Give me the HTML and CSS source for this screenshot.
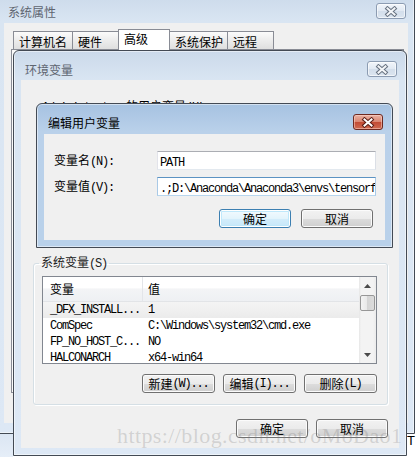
FILE: index.html
```html
<!DOCTYPE html>
<html lang="zh-CN">
<head>
<meta charset="utf-8">
<title>系统属性</title>
<link rel="stylesheet" href="styles.css">
</head>
<body>
<div class="deskcorner"></div>
<span class="desk-t">T</span>

<div class="win sys inactive">
  <div class="titlebar">
    <span class="title">系统属性</span>
    <span class="close"><svg width="14" height="11" viewBox="0 0 14 11"><path d="M3.5 2.5 L10.5 8.5 M10.5 2.5 L3.5 8.5" stroke="#66717f" stroke-width="4" stroke-linecap="square" fill="none"/><path d="M3.5 2.5 L10.5 8.5 M10.5 2.5 L3.5 8.5" stroke="#f4f6f9" stroke-width="2" stroke-linecap="square" fill="none"/></svg></span>
  </div>
  <div class="client sysbody">
    <div class="tabs">
      <span class="tab t1">计算机名</span>
      <span class="tab t2">硬件</span>
      <span class="tab t3 sel">高级</span>
      <span class="tab t4">系统保护</span>
      <span class="tab t5">远程</span>
    </div>
    <div class="tabpanel"></div>
  </div>
</div>

<div class="win env inactive">
  <div class="titlebar">
    <span class="title">环境变量</span>
    <span class="close"><svg width="14" height="11" viewBox="0 0 14 11"><path d="M3.5 2.5 L10.5 8.5 M10.5 2.5 L3.5 8.5" stroke="#66717f" stroke-width="4" stroke-linecap="square" fill="none"/><path d="M3.5 2.5 L10.5 8.5 M10.5 2.5 L3.5 8.5" stroke="#f4f6f9" stroke-width="2" stroke-linecap="square" fill="none"/></svg></span>
  </div>
  <div class="client envbody">
    <div class="usersec"><span class="m">Administrator </span>的用户变量<span class="m">(U)</span></div>
    <fieldset class="grp">
      <legend>系统变量<span class="m">(S)</span></legend>
      <div class="list">
        <div class="lv">
          <div class="lvh"><span class="hc1">变量</span><span class="hc2">值</span></div>
          <div class="row sel"><span class="m">_DFX_INSTALL...</span><span class="m">1</span></div>
          <div class="row"><span class="m">ComSpec</span><span class="m">C:\Windows\system32\cmd.exe</span></div>
          <div class="row"><span class="m">FP_NO_HOST_C...</span><span class="m">NO</span></div>
          <div class="row"><span class="m">HALCONARCH</span><span class="m">x64-win64</span></div>
        </div>
        <div class="sb">
          <div class="sbb"><svg width="7" height="4" viewBox="0 0 7 4"><path d="M3.5 0 L7 4 L0 4 Z" fill="#4a4a4a"/></svg></div>
          <div class="sbtrack"><div class="thumb"></div></div>
          <div class="sbb"><svg width="7" height="4" viewBox="0 0 7 4"><path d="M0 0 L7 0 L3.5 4 Z" fill="#4a4a4a"/></svg></div>
        </div>
      </div>
      <div class="btnrow">
        <span class="btn w73">新建<span class="m">(W)...</span></span>
        <span class="btn w73">编辑<span class="m">(I)...</span></span>
        <span class="btn w73">删除<span class="m">(L)</span></span>
      </div>
    </fieldset>
    <div class="okrow">
      <span class="btn w72">确定</span>
      <span class="btn w72">取消</span>
    </div>
  </div>
</div>

<div class="win edit active">
  <div class="titlebar">
    <span class="title">编辑用户变量</span>
    <span class="close red"><svg width="14" height="11" viewBox="0 0 14 11"><path d="M3.5 2.5 L10.5 8.5 M10.5 2.5 L3.5 8.5" stroke="#5a1d15" stroke-width="4" stroke-linecap="square" fill="none"/><path d="M3.5 2.5 L10.5 8.5 M10.5 2.5 L3.5 8.5" stroke="#ffffff" stroke-width="2" stroke-linecap="square" fill="none"/></svg></span>
  </div>
  <div class="client editbody">
    <div class="form">
      <span class="lbl">变量名<span class="m">(N):</span></span>
      <div class="tb"><span class="m">PATH</span></div>
      <span class="lbl">变量值<span class="m">(V):</span></span>
      <div class="tb focus"><span class="m">.;D:\Anaconda\Anaconda3\envs\tensorf</span></div>
    </div>
    <div class="ebtns">
      <span class="btn w72 def">确定</span>
      <span class="btn w72">取消</span>
    </div>
  </div>
</div>

<div class="wm">https://blog.csdn.net/oMoDao1</div>
</body>
</html>
```

FILE: styles.css
```css
* { box-sizing: border-box; }
html, body { margin: 0; padding: 0; }
body {
  width: 418px;
  height: 457px;
  overflow: hidden;
  position: relative;
  background: #ffffff;
  font-family: "Noto Sans CJK SC", "Noto Sans", sans-serif;
  font-size: 12px;
  color: #000;
}
.m {
  font-family: "Liberation Mono", "DejaVu Sans Mono", monospace;
  font-size: 12px;
  letter-spacing: -1.2px;
}

.deskcorner {
  position: absolute;
  left: 0; top: 434px;
  width: 13px; height: 23px;
  background: linear-gradient(#dbe6f3, #e6eef8);
}
.desk-t {
  position: absolute;
  left: 407px; top: 433px;
  font-family: "Liberation Sans", sans-serif;
  font-size: 13px;
  line-height: 16px;
}

/* windows */
.win {
  position: absolute;
  border: 1px solid #434a54;
  border-radius: 6px 6px 0 0;
  padding: 0 7px 7px;
  display: flex;
  flex-direction: column;
  box-shadow: inset 0 0 0 1px rgba(255,255,255,0.5);
}
.win.inactive { background: linear-gradient(#cbd9ea 0, #d9e5f2 28px, #dde8f5 100%); }
.win.active   { background: linear-gradient(#a6c2e1 0, #bad1ea 28px, #b9d1ea 100%); }

.titlebar {
  flex: none;
  display: flex;
  justify-content: space-between;
  align-items: flex-start;
  padding: 10px 2px 0 4px;
}
.title { line-height: 16px; margin-top: 1px; }
.inactive .title { color: #5e6570; }
.active .title { color: #000; }

.close {
  width: 30px; height: 16px;
  border: 1px solid #8c9cb2;
  border-radius: 3px;
  display: flex; align-items: center; justify-content: center;
  background: linear-gradient(#f1f5fa, #e1e9f3 50%, #d3deeb 50%, #dbe5f0);
  box-shadow: inset 0 0 0 1px rgba(255,255,255,0.6);
}
.close.red {
  border-color: #6e2a21;
  background: linear-gradient(#eab2a4, #d9846f 50%, #c24a33 50%, #cf6b53);
  box-shadow: inset 0 0 0 1px rgba(255,220,210,0.5);
}

.client { flex: 1; min-height: 0; background: #f0f0f0; }

.sys { left: -5px; top: -8px; width: 420px; height: 442px; padding: 0 6px 10px 8px; }
.sys .titlebar { height: 30px; }
.env { left: 13px; top: 50px; width: 394px; height: 406px; }
.env .titlebar { height: 29px; }
.edit { left: 36px; top: 103px; width: 357px; height: 145px; }
.edit .titlebar { height: 30px; }

/* system properties body */
.sysbody { padding: 6px 0 0 7px; }
.tabs {
  display: flex;
  align-items: flex-end;
  margin: 0 0 -1px 2px;
  position: relative;
  z-index: 1;
}
.tab {
  height: 18px;
  margin-bottom: 1px;
  border: 1px solid #898c95;
  border-bottom: none;
  background: linear-gradient(#fbfbfb, #ececec 50%, #dfdfdf 100%);
  padding: 2px 0 0 5px;
  display: flex; align-items: center;
  line-height: 14px;
}
.tab + .tab { margin-left: -1px; }
.t1 { width: 60px; }
.t2 { width: 47px; }
.t3 { width: 52px; }
.t4 { width: 59px; }
.t5 { width: 47px; }
.tab.sel {
  height: 21px;
  margin-bottom: 0;
  background: #fff;
  padding: 0 0 2px 5px;
}
.tabpanel {
  width: 393px;
  height: 344px;
  border: 1px solid #898c95;
  background: #fafafa;
}

/* environment variables */
.usersec {
  height: 175px;
  padding: 18px 0 0 21px;
  line-height: 16px;
  white-space: nowrap;
}
.grp {
  margin: 0 11px 0 12px;
  padding: 5px 10px 11px 8px;
  border: 1px solid #d5dfe5;
  border-radius: 3px;
  box-shadow: inset 1px 1px 0 #fff, 1px 1px 0 #fff;
  min-width: 0;
}
.grp legend {
  padding: 0 2px;
  margin-left: -3px;
  line-height: 14px;
  color: #222;
}
.list {
  height: 88px;
  border: 1px solid #828790;
  background: #fff;
  display: flex;
}
.lv { flex: 1; min-width: 0; overflow: hidden; }
.lvh {
  height: 25px;
  display: grid;
  grid-template-columns: 100px 1fr;
  background: linear-gradient(#ffffff 0, #ffffff 45%, #f3f4f6 50%, #eef0f3 100%);
  border-bottom: 1px solid #e2e4e7;
}
.lvh span { display: flex; align-items: center; line-height: 16px; }
.hc1 { padding-left: 7px; border-right: 1px solid #e3e5e9; }
.hc2 { padding-left: 5px; }
.row {
  height: 16px;
  display: grid;
  grid-template-columns: 100px 1fr;
  align-items: center;
  white-space: nowrap;
  line-height: 16px;
}
.row span:first-child { padding-left: 7px; }
.row span:last-child { padding-left: 5px; }
.row.sel { background: linear-gradient(#f4f4f4, #ebebeb); }

.sb {
  width: 17px;
  flex: none;
  display: flex;
  flex-direction: column;
  background: linear-gradient(90deg, #e6e6e6, #f3f3f3 2px, #f3f3f3 14px, #ebebeb);
}
.sbb { height: 17px; flex: none; display: flex; align-items: center; justify-content: center; }
.sbtrack { flex: 1; padding: 1px 1px 0; }
.thumb {
  height: 16px;
  border: 1px solid #979797;
  border-radius: 2px;
  background: linear-gradient(90deg, #f3f3f3, #e8e8e8 50%, #d5d5d5 50%, #dcdcdc);
}

.btnrow {
  display: flex;
  justify-content: flex-end;
  gap: 8px;
  margin-top: 10px;
}
.okrow {
  display: flex;
  justify-content: flex-end;
  gap: 8px;
  margin: 14px 11px 0 0;
}

.btn {
  height: 19px;
  border: 1px solid #707070;
  border-radius: 3px;
  display: flex; align-items: center; justify-content: center;
  line-height: 16px;
  white-space: nowrap;
  background: linear-gradient(#f2f2f2, #ebebeb 50%, #dddddd 50%, #cfcfcf);
  box-shadow: inset 0 0 0 1px #fbfbfb;
}
.w72 { width: 72px; }
.w73 { width: 73px; }
.btn.def {
  border-color: #3c7fb1;
  background: linear-gradient(#f3fafe, #e3f4fc 50%, #d3edfb 50%, #c6e7f9);
  box-shadow: inset 0 0 0 1px #ffffff, inset 0 0 0 2px #bfe8fb;
}

/* edit dialog */
.form {
  display: grid;
  grid-template-columns: 103px 219px;
  grid-auto-rows: 19px;
  row-gap: 7px;
  padding: 17px 0 0 10px;
  align-items: center;
}
.lbl { line-height: 16px; white-space: nowrap; }
.tb {
  height: 19px;
  border: 1px solid;
  border-color: #abadb3 #dbdfe6 #e3e9ef #e2e3ea;
  background: #fff;
  padding: 0 2px;
  overflow: hidden;
  white-space: nowrap;
  line-height: 17px;
}
.tb.focus { border-color: #5d93c2 #a9c9e6 #b7d6ee #a9c9e6; }
.ebtns {
  display: flex;
  justify-content: flex-end;
  gap: 10px;
  margin-top: 13px;
  padding-right: 12px;
}

.wm {
  position: absolute;
  left: 117px; top: 425px;
  font-family: "Liberation Serif", serif;
  font-size: 22px;
  line-height: 22px;
  letter-spacing: 0.4px;
  color: rgba(120,120,120,0.26);
  white-space: nowrap;
}
```
